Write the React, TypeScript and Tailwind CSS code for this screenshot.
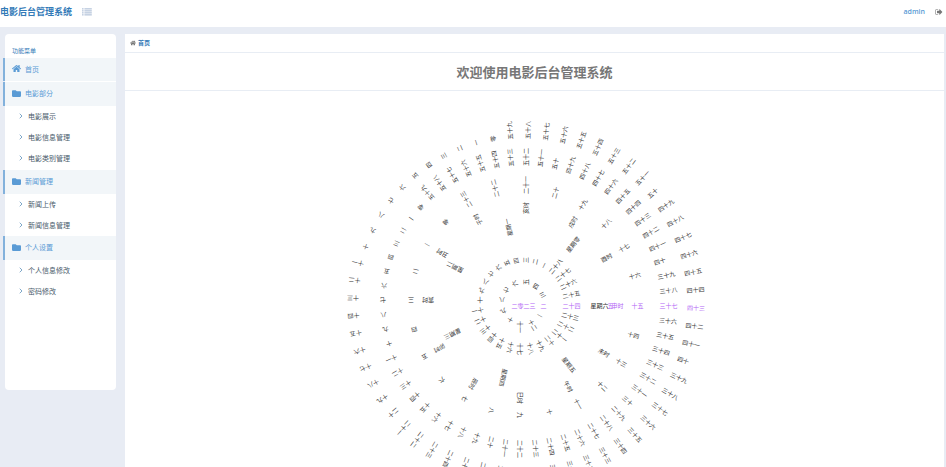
import { FaFolder, FaHome } from "react-icons/fa";
import { FiChevronRight } from "react-icons/fi";

const DIGITS = ["零", "一", "二", "三", "四", "五", "六", "七", "八", "九"];

function toChinese(n: number): string {
  if (n < 10) return DIGITS[n];
  const tens = Math.floor(n / 10);
  const ones = n % 10;
  return (tens > 1 ? DIGITS[tens] : "") + "十" + (ones ? DIGITS[ones] : "");
}

const range = (from: number, to: number) =>
  Array.from({ length: to - from + 1 }, (_, i) => toChinese(from + i));

type Ring = {
  name: string;
  labels: string[];
  current: number;
  radius: number;
  turn?: number;
  plain?: boolean;
};

const RINGS: Ring[] = [
  { name: "month", labels: range(1, 12), current: 1, radius: 18 },
  { name: "day", labels: range(1, 28), current: 23, radius: 40 },
  {
    name: "week",
    labels: ["零", "一", "二", "三", "四", "五", "六"].map((d) => "星期" + d),
    current: 6,
    radius: 68,
    plain: true,
  },
  {
    name: "period",
    labels: [..."子丑寅卯辰巳午未申酉戌亥"].map((d) => d + "时"),
    current: 8,
    radius: 89,
  },
  { name: "hour", labels: range(0, 23), current: 15, radius: 109 },
  { name: "minute", labels: range(0, 59), current: 37, radius: 137 },
  { name: "second", labels: range(0, 59), current: 43, radius: 164, turn: 0.8 },
];

function ClockRing({ labels, current, radius, turn = 0, plain }: Ring) {
  const step = 360 / labels.length;
  return (
    <>
      {labels.map((label, i) => (
        <span
          key={label}
          className={
            "absolute left-0 top-0 origin-top-left whitespace-nowrap " +
            (i === current && !plain ? "text-[#b366f5]" : "text-[#333]")
          }
          style={{
            transform: `rotate(${(current - i) * step + turn}deg) translateX(${radius}px)`,
          }}
        >
          {label}
        </span>
      ))}
    </>
  );
}

function Clock() {
  return (
    <div className="relative mr-6 h-[424px] text-[6px] leading-[6px]">
      <div className="absolute left-1/2 top-1/2">
        <span className="absolute -left-3 top-0 ml-px whitespace-nowrap text-[#b366f5]">
          二零二三
        </span>
        <span className="absolute left-[85px] top-0 text-[#b366f5]">五</span>
        {RINGS.map((ring) => (
          <ClockRing key={ring.name} {...ring} />
        ))}
      </div>
    </div>
  );
}

function ListIcon() {
  return (
    <svg viewBox="0 0 10 8" className="h-2 w-2.5" fill="currentColor" aria-hidden="true">
      {[0, 2, 4, 6].map((y) => (
        <g key={y}>
          <rect x="0" y={y + 0.2} width="1.6" height="1.3" />
          <rect x="2.4" y={y + 0.2} width="7.4" height="1.3" />
        </g>
      ))}
    </svg>
  );
}

function SignOutIcon() {
  return (
    <svg viewBox="0 0 1792 1792" className="size-2" fill="currentColor" aria-hidden="true">
      <path d="M704 1440q0 4 1 20t.5 26.5-3 23.5-10 19.5-20.5 6.5h-320q-119 0-203.5-84.5t-84.5-203.5v-704q0-119 84.5-203.5t203.5-84.5h320q13 0 22.5 9.5t9.5 22.5q0 4 1 20t.5 26.5-3 23.5-10 19.5-20.5 6.5h-320q-66 0-113 47t-47 113v704q0 66 47 113t113 47h312l11.5 1 11.5 3 8 5.5 7 9 2 13.5zm928-544q0 26-19 45l-544 544q-19 19-45 19t-45-19-19-45v-288h-448q-26 0-45-19t-19-45v-384q0-26 19-45t45-19h448v-288q0-26 19-45t45-19 45 19l544 544q19 19 19 45z" />
    </svg>
  );
}

const MENU = [
  { title: "电影部分", items: ["电影展示", "电影信息管理", "电影类别管理"] },
  { title: "新闻管理", items: ["新闻上传", "新闻信息管理"] },
  { title: "个人设置", items: ["个人信息修改", "密码修改"] },
];

const groupClass =
  "-ml-0.5 flex items-center gap-1 border-l-2 border-[#82b1dc] bg-[#f2f6f9] pb-0.5 pl-[7px] text-[#5a9bd5]";

function Sidebar() {
  return (
    <nav className="h-[356px] w-[111px] shrink-0 rounded bg-white pt-3 text-[7px] leading-3">
      <h2 className="h-3 pl-[7px] text-[6px] leading-[10px] text-[#337ab7]">功能菜单</h2>
      <a href="#home" className={groupClass + " h-[23px]"}>
        <FaHome className="size-[9px]" />
        首页
      </a>
      {MENU.map((group, g) => (
        <section key={group.title} className={g === 0 ? "mt-px pb-px" : ""}>
          <a href="#group" className={groupClass + " h-6"}>
            <FaFolder className="size-[9px]" />
            {group.title}
          </a>
          <ul>
            {group.items.map((item) => (
              <li key={item}>
                <a href="#item" className="flex h-[21px] items-center gap-[3px] pb-0.5 pl-3 text-[#485a6a]">
                  <FiChevronRight strokeWidth={3} className="size-2 text-[#7fa8c9]" />
                  {item}
                </a>
              </li>
            ))}
          </ul>
        </section>
      ))}
    </nav>
  );
}

export default function App() {
  return (
    <div className="h-screen overflow-hidden bg-[#e8ecf4] font-['Noto_Sans_CJK_SC',sans-serif]">
      <header className="flex h-[27px] items-center bg-white pb-1 pr-[3px]">
        <h1 className="text-[9px] font-bold leading-3 text-[#337ab7]">电影后台管理系统</h1>
        <button type="button" aria-label="菜单" className="ml-2.5 text-[#b9c8dc]">
          <ListIcon />
        </button>
        <a href="#user" className="ml-auto font-['Open_Sans',sans-serif] text-[7px] font-semibold leading-3 text-[#5a9bd5]">
          admin
        </a>
        <button type="button" aria-label="退出" className="ml-2.5 text-[#777]">
          <SignOutIcon />
        </button>
      </header>
      <div className="flex items-start gap-[9px] pl-[5px] pr-0.5 pt-[7px]">
        <Sidebar />
        <main className="min-w-0 flex-1 bg-white">
          <div className="flex h-[19px] items-center gap-0.5 border-b border-[#e8edf4] pl-[5px] text-[6px] font-bold leading-3">
            <FaHome className="size-1.5 text-[#777]" />
            <a href="#home" className="text-[#337ab7]">首页</a>
          </div>
          <h2 className="flex h-[38px] items-center justify-center border-b border-[#e8edf4] text-[13px] font-bold leading-5 text-[#777]">
            欢迎使用电影后台管理系统
          </h2>
          <Clock />
        </main>
      </div>
    </div>
  );
}
